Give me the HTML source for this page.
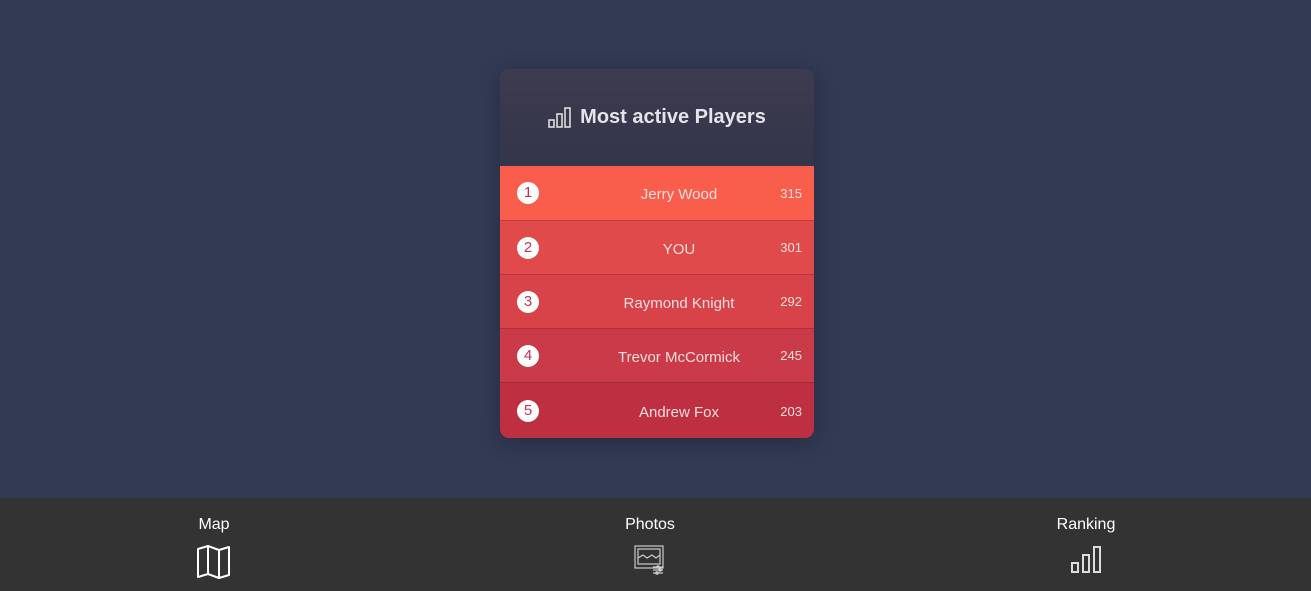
<!DOCTYPE html>
<html><head><style>
body{margin:0;width:1311px;height:591px;background:#323a54;font-family:"Liberation Sans",sans-serif;position:relative;overflow:hidden}
.card{position:absolute;left:500px;top:69px;width:314px;height:369px;border-radius:9px;overflow:hidden;box-shadow:0 4px 20px rgba(0,0,0,.25)}
.hd{height:97px;background:linear-gradient(#3d3b50,#33354a);display:flex;align-items:center;justify-content:center;color:#e4e4ea;font-weight:bold;font-size:20px}
.hd svg{margin-right:8px}
.row{height:53px;border-top:1px solid rgba(0,0,0,.15);display:flex;align-items:center;color:#f6dede;font-size:15px;position:relative}
.row.f{border-top:none;height:54px}
.n{position:absolute;left:17px;top:50%;margin-top:-11px;width:22px;height:22px;border-radius:50%;background:#fff;color:#c5344a;font-size:15px;text-align:center;line-height:22px}
.nm{position:absolute;width:358px;left:0;text-align:center;margin-top:3px}
.sc{position:absolute;right:12px;font-size:13px}
.ft{position:absolute;left:0;top:498px;width:1311px;height:93px;background:#333}
.it{position:absolute;top:18px;color:#fff;font-size:16px;text-align:center;width:120px}
</style></head><body>
<div class="card">
<div class="hd"><svg width="24" height="22" viewBox="0 0 24 22" fill="none" stroke="#ddd" stroke-width="1.6"><rect x="1" y="13" width="5" height="7"/><rect x="9" y="7" width="5" height="13"/><rect x="17" y="1" width="5" height="19"/></svg>Most active Players</div>
<div class="row f" style="background:#f95e4c"><span class="n">1</span><span class="nm">Jerry Wood</span><span class="sc">315</span></div>
<div class="row" style="background:#e04a4a"><span class="n">2</span><span class="nm">YOU</span><span class="sc">301</span></div>
<div class="row" style="background:#d84349"><span class="n">3</span><span class="nm">Raymond Knight</span><span class="sc">292</span></div>
<div class="row" style="background:#cb3a48"><span class="n">4</span><span class="nm">Trevor McCormick</span><span class="sc">245</span></div>
<div class="row" style="background:#bf2f42;height:56px"><span class="n">5</span><span class="nm">Andrew Fox</span><span class="sc">203</span></div>
</div>
<div class="ft">
<div class="it" style="left:154px">Map<br><svg style="margin-top:11px" width="34" height="34" viewBox="0 0 34 34" fill="none" stroke="#fff" stroke-width="2" stroke-linejoin="round"><path d="M1 4 L11 1 L22 5 L32 2 V30 L22 33 L11 29 L1 32 Z M11 1 V29 M22 5 V33"/></svg></div>
<div class="it" style="left:590px">Photos<br><svg style="margin-top:11px" width="32" height="30" viewBox="0 0 32 30" fill="none" stroke="#ccc" stroke-width="1.2"><rect x="1" y="1" width="28" height="22"/><rect x="4" y="4" width="22" height="15"/><path d="M4 13 l5-3 4 3 5-3 4 3 4-3"/><path d="M19 22h10M19 25h10M19 28h10"/><circle cx="24" cy="22" r="1.2"/><circle cx="26" cy="25" r="1.2"/><circle cx="23" cy="28" r="1.2"/></svg></div>
<div class="it" style="left:1026px">Ranking<br><svg style="margin-top:12px" width="30" height="28" viewBox="0 0 30 28" fill="none" stroke="#ddd" stroke-width="2"><rect x="1" y="17" width="6" height="9"/><rect x="12" y="9" width="6" height="17"/><rect x="23" y="1" width="6" height="25"/></svg></div>
</div>
</body></html>
